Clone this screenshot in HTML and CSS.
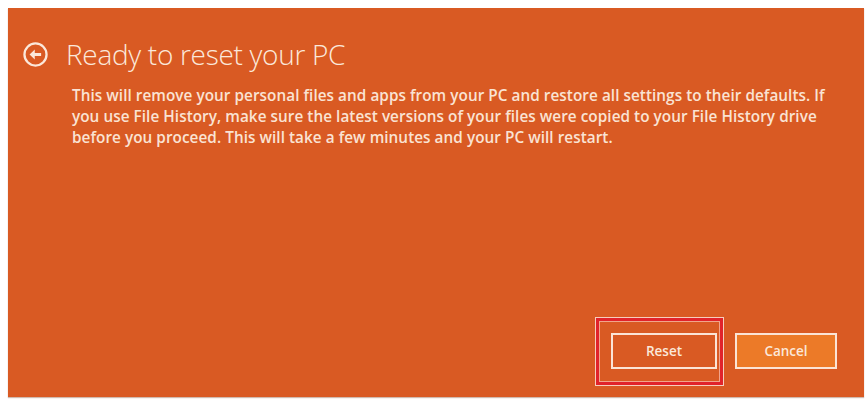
FILE: index.html
```html
<!DOCTYPE html>
<html lang="en">
<head>
<meta charset="utf-8">
<title>Ready to reset your PC</title>
<link rel="stylesheet" href="styles.css">
</head>
<body>
  <main class="panel">
    <header class="heading">
      <svg class="back" viewBox="0 0 24 24" aria-hidden="true">
        <circle cx="12" cy="12" r="10.6" fill="none" stroke="currentColor" stroke-width="2.2"/>
        <path d="M6.3 12 L11.3 7.2 V10.5 H17.4 V13.5 H11.3 V16.8 Z" fill="currentColor"/>
      </svg>
      <h1 class="title">Ready to reset your PC</h1>
    </header>
    <p class="message">This will remove your personal files and apps from your PC and restore all settings to their defaults. If<br>you use File History, make sure the latest versions of your files were copied to your File History drive<br>before you proceed. This will take a few minutes and your PC will restart.</p>
    <div class="actions">
      <div class="focus-wrap">
        <button class="btn">Reset</button>
        <span class="focus-ring" aria-hidden="true"></span>
      </div>
      <button class="btn btn-primary">Cancel</button>
    </div>
  </main>
</body>
</html>
```

FILE: styles.css
```css
html, body {
  margin: 0;
  padding: 0;
  background: #ffffff;
}

body {
  padding: 8px 4px 3px 8px;
  font-family: "Open Sans", "Noto Sans", "DejaVu Sans", sans-serif;
}

.panel {
  box-sizing: border-box;
  width: 856px;
  height: 389px;
  background: #d95a23;
  color: #fbe8da;
  display: flex;
  flex-direction: column;
  padding: 28px 27px 0 15px;
  box-shadow: 0 1px 1px rgba(120, 60, 30, 0.35);
}

.heading {
  display: flex;
  align-items: center;
  gap: 18px;
}

.back {
  width: 25px;
  height: 25px;
  flex: none;
  color: #fbe8da;
}

.title {
  margin: 0;
  font-size: 28px;
  font-weight: 300;
  line-height: 36px;
  letter-spacing: -0.3px;
}

.message {
  margin: 13px 0 0 49px;
  font-size: 15.3px;
  font-weight: 600;
  line-height: 21px;
  letter-spacing: 0.05px;
  color: #fae3d3;
}

.actions {
  margin-top: auto;
  margin-bottom: 28px;
  display: flex;
  justify-content: flex-end;
  gap: 18px;
}

.focus-wrap {
  position: relative;
  display: flex;
}

.btn {
  box-sizing: border-box;
  width: 106px;
  height: 36px;
  border: 2px solid #fbe4d6;
  background: #d95a23;
  color: #fbe8da;
  font-family: inherit;
  font-size: 13.5px;
  font-weight: 600;
  padding: 0;
}

.btn-primary {
  width: 102px;
  background: #ec7a28;
}

.focus-ring {
  position: absolute;
  left: -15px;
  right: -6px;
  top: -15px;
  bottom: -16px;
  border: 3px solid #e1232b;
  box-shadow: 0 0 0 1px #f7cdbd, inset 0 0 0 1px #f1a58c;
  pointer-events: none;
}
```
